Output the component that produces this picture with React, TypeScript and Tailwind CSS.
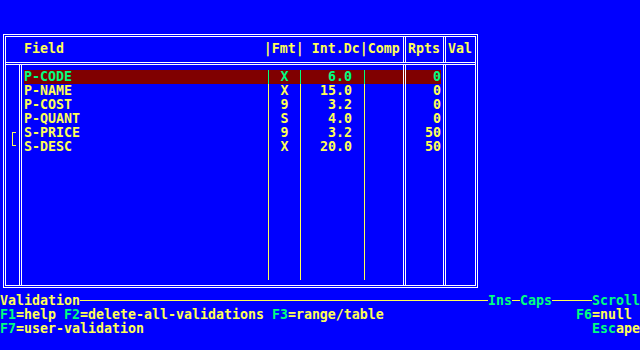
import React from 'react';

type FieldRow = { name: string; fmt: string; dc: string; rpts: string };

const fields: FieldRow[] = [
  { name: 'P-CODE', fmt: 'X', dc: '6.0', rpts: '0' },
  { name: 'P-NAME', fmt: 'X', dc: '15.0', rpts: '0' },
  { name: 'P-COST', fmt: '9', dc: '3.2', rpts: '0' },
  { name: 'P-QUANT', fmt: 'S', dc: '4.0', rpts: '0' },
  { name: 'S-PRICE', fmt: '9', dc: '3.2', rpts: '50' },
  { name: 'S-DESC', fmt: 'X', dc: '20.0', rpts: '50' },
];

// 15 text rows in the body, the rest are blank
const bodyRows: (FieldRow | null)[] = [...fields, ...Array(9).fill(null)];

const BodyDivider = ({ hl }: { hl?: boolean }) => (
  <div className="flex w-[3px] flex-col">
    <div className="h-[5px] border-x border-white" />
    <div className={hl ? 'h-[14px] border-x border-white bg-[#800000]' : 'h-[14px] border-x border-white'} />
    <div className="flex-1 border-x border-white" />
  </div>
);

const Key = ({ k, label }: { k: string; label: string }) => (
  <>
    <span className="text-[#00ff80]">{k}</span>
    <span>{label}</span>
  </>
);

export default function App() {
  return (
    <div className="h-[350px] w-[640px] overflow-hidden bg-[#0000ff] pt-[34px] font-['DejaVu_Sans_Mono','Liberation_Mono',monospace] text-[13.29px] font-bold leading-[14px] text-[#ffff55]">
      {/* main frame */}
      <div className="ml-[3px] flex h-[254px] w-[475px] flex-col border-[3px] border-double border-white">
        {/* header */}
        <div className="flex h-[25px]">
          <div className="w-[397px] whitespace-pre pl-[2px] pt-[5px]">{'  Field                         |Fmt| Int.Dc|Comp'}</div>
          <div className="w-[3px] border-x border-white" />
          <div className="w-[37px] pl-[2px] pt-[5px]">Rpts</div>
          <div className="w-[3px] border-x border-white" />
          <div className="w-[29px] pl-[2px] pt-[5px]">Val</div>
        </div>
        <div className="h-[3px] border-y border-white" />

        {/* body */}
        <div className="flex flex-1">
          <div className="w-[13px] pl-[6px] pt-[67px]">
            <div className="h-[14px] w-[4px] border-y border-l border-[#ffff55]" />
          </div>
          <BodyDivider />
          <div className="w-[381px] pt-[5px]">
            {bodyRows.map((r, i) => {
              const hl = i === 0;
              const line = hl ? 'border-[#00ff80]' : 'border-[#ffff55]';
              return (
                <div
                  key={i}
                  className={
                    hl
                      ? 'ml-[2px] flex h-[14px] w-[379px] bg-[#800000] text-[#00ff80]'
                      : 'ml-[2px] flex h-[14px] w-[379px]'
                  }
                >
                  <div className="w-[244px] whitespace-pre">{r?.name}</div>
                  <div className={`w-[32px] border-l text-center ${line}`}>{r?.fmt}</div>
                  <div className={`w-[64px] border-l pr-[12px] text-right ${line}`}>{r?.dc}</div>
                  <div className={`w-[39px] border-l ${line}`} />
                </div>
              );
            })}
          </div>
          <BodyDivider hl />
          <div className="w-[37px] pt-[5px]">
            {fields.map((r, i) => (
              <div
                key={i}
                className={i === 0 ? 'mr-[2px] h-[14px] bg-[#800000] text-right text-[#00ff80]' : 'mr-[2px] h-[14px] text-right'}
              >
                {r.rpts}
              </div>
            ))}
          </div>
          <BodyDivider />
          <div className="w-[29px]" />
        </div>
      </div>

      {/* status lines */}
      <div className="mt-[6px]">
        <div className="flex h-[14px]">
          <span>Validation</span>
          <div className="mt-[6px] h-px w-[408px] bg-[#ffff55]" />
          <span className="text-[#00ff80]">Ins</span>
          <div className="mt-[6px] h-px w-[8px] bg-[#ffff55]" />
          <span className="text-[#00ff80]">Caps</span>
          <div className="mt-[6px] h-px w-[40px] bg-[#ffff55]" />
          <span className="text-[#00ff80]">Scroll</span>
        </div>
        <div className="flex h-[14px] justify-between whitespace-pre pr-[8px]">
          <div>
            <Key k="F1" label="=help " />
            <Key k="F2" label="=delete-all-validations " />
            <Key k="F3" label="=range/table" />
          </div>
          <div>
            <Key k="F6" label="=null" />
          </div>
        </div>
        <div className="flex h-[14px] justify-between whitespace-pre">
          <div>
            <Key k="F7" label="=user-validation" />
          </div>
          <div>
            <Key k="Esc" label="ape" />
          </div>
        </div>
      </div>
    </div>
  );
}
